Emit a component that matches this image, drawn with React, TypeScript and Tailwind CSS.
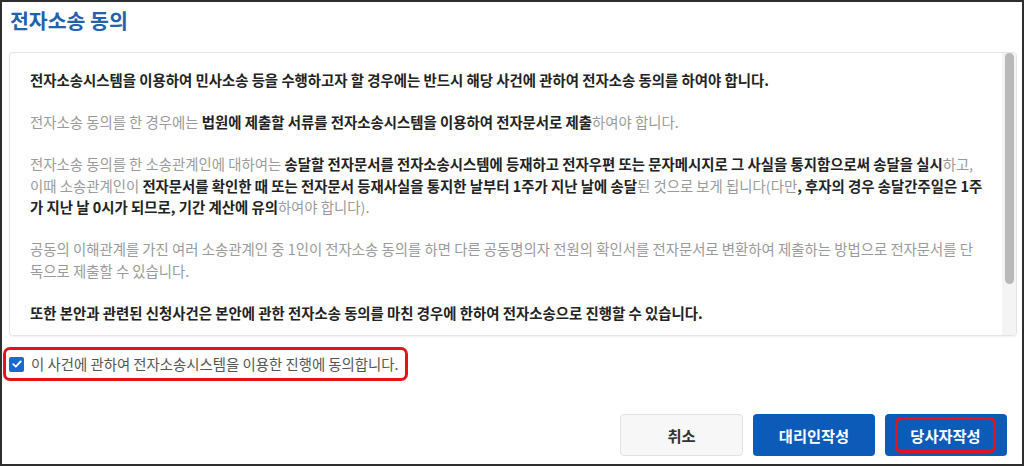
import React from "react";

const font = { fontFamily: '"Noto Sans CJK KR", "Noto Sans", sans-serif' };

function B({ children }: { children: React.ReactNode }) {
  return <span className="font-bold text-[#222]">{children}</span>;
}
function G({ children }: { children: React.ReactNode }) {
  return <span className="text-[#9a9a9a]">{children}</span>;
}

export default function App() {
  return (
    <div
      className="w-[1024px] h-[466px] border-2 border-[#2e2e2e] bg-white flex flex-col pl-[7px] pr-[5px] overflow-hidden"
      style={font}
    >
      <h1 className="mt-[5px] ml-[1px] text-[20.5px] leading-[26px] font-bold text-[#2262aa]">
        전자소송 동의
      </h1>
      <div className="mt-[19px] h-[284px] border border-[#e4e4e4] rounded-[4px] flex shadow-[0_1px_2px_rgba(0,0,0,0.06)]">
        <div className="flex-1 pl-[20px] pt-[16px] text-[14.4px] leading-[21.5px] whitespace-nowrap flex flex-col gap-[20.5px]">
          <p>
            <B>전자소송시스템을 이용하여 민사소송 등을 수행하고자 할 경우에는 반드시 해당 사건에 관하여 전자소송 동의를 하여야 합니다.</B>
          </p>
          <p>
            <G>전자소송 동의를 한 경우에는 </G>
            <B>법원에 제출할 서류를 전자소송시스템을 이용하여 전자문서로 제출</B>
            <G>하여야 합니다.</G>
          </p>
          <p>
            <G>전자소송 동의를 한 소송관계인에 대하여는 </G>
            <B>송달할 전자문서를 전자소송시스템에 등재하고 전자우편 또는 문자메시지로 그 사실을 통지함으로써 송달을 실시</B>
            <G>하고,</G>
            <br />
            <G>이때 소송관계인이 </G>
            <B>전자문서를 확인한 때 또는 전자문서 등재사실을 통지한 날부터 1주가 지난 날에 송달</B>
            <G>된 것으로 보게 됩니다(다만</G>
            <B>, 후자의 경우 송달간주일은 1주</B>
            <br />
            <B>가 지난 날 0시가 되므로, 기간 계산에 유의</B>
            <G>하여야 합니다).</G>
          </p>
          <p>
            <G>
              공동의 이해관계를 가진 여러 소송관계인 중 1인이 전자소송 동의를 하면 다른 공동명의자 전원의 확인서를 전자문서로 변환하여 제출하는 방법으로 전자문서를 단
            </G>
            <br />
            <G>독으로 제출할 수 있습니다.</G>
          </p>
          <p>
            <B>또한 본안과 관련된 신청사건은 본안에 관한 전자소송 동의를 마친 경우에 한하여 전자소송으로 진행할 수 있습니다.</B>
          </p>
        </div>
        <div className="w-[14px] bg-[#f4f4f4] flex justify-center rounded-r-[3px]">
          <div className="w-[9px] h-[231px] bg-[#b9b9b9] rounded-full" />
        </div>
      </div>

      <div className="mt-[11px] -ml-[6px] self-start flex items-center h-[34px] border-[3px] border-[#e3131b] rounded-[7px] pl-[3px] pr-[6px]">
        <span className="w-[15px] h-[15px] rounded-[2px] bg-[#1869d3] flex items-center justify-center">
          <svg viewBox="0 0 16 16" className="w-[12px] h-[12px]">
            <path d="M3 8.3 L6.4 11.6 L13 4.6" fill="none" stroke="white" strokeWidth="2.4" strokeLinecap="round" strokeLinejoin="round" />
          </svg>
        </span>
        <span className="ml-[7px] text-[14.4px] text-[#555]">
          이 사건에 관하여 전자소송시스템을 이용한 진행에 동의합니다.
        </span>
      </div>

      <div className="mt-[33px] flex justify-end gap-[10px] pr-[10px]">
        <button className="w-[123px] h-[42px] rounded-[4px] bg-[#f7f7f7] border border-[#e2e2e2] text-[15.3px] font-bold text-[#333]">
          취소
        </button>
        <button className="w-[122px] h-[42px] rounded-[4px] bg-[#0d5bb9] text-[15.3px] font-bold text-white">
          대리인작성
        </button>
        <button className="w-[122px] h-[42px] rounded-[4px] bg-[#0d5bb9] text-[15.3px] font-bold text-white flex items-stretch pt-[3px] pb-[3px] pl-[10px] pr-[11px]">
          <span className="flex-1 border-[3px] border-[#e3131b] rounded-[6px] flex items-center justify-center">
            당사자작성
          </span>
        </button>
      </div>
    </div>
  );
}
